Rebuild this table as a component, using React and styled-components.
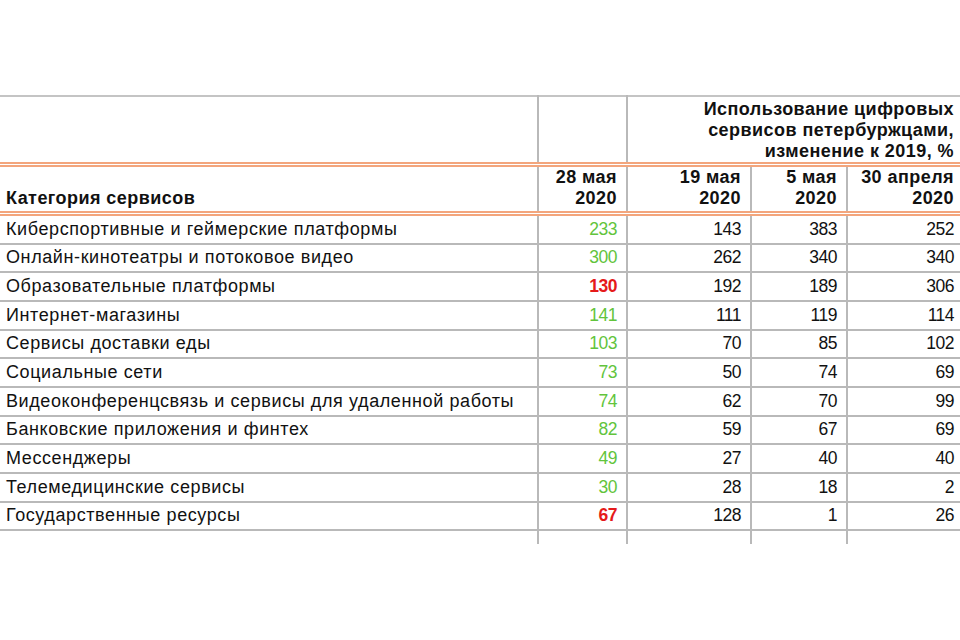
import React from 'react'
import styled, { createGlobalStyle } from 'styled-components'

const GlobalStyle = createGlobalStyle`
  html, body {
    margin: 0;
    padding: 0;
    background: #ffffff;
  }
  body {
    font-family: "Liberation Sans", Arial, sans-serif;
    color: #111111;
  }
`;

const Page = styled.div`
  width: 960px;
  height: 640px;
  overflow: hidden;
  padding-top: 95px;
  box-sizing: border-box;
`;

const Table = styled.table`
  width: 963px;
  border-collapse: collapse;
  table-layout: fixed;
  font-size: 18px;
`;

const TitleRow = styled.tr`
  border-top: 2px solid #c4c4c4;
  border-bottom: 5px double #f3a57c;
`;

const DateRow = styled.tr`
  border-bottom: 5px double #f3a57c;
`;

const Row = styled.tr`
  border-bottom: 2px solid #b9b9b9;
`;

const TailRow = styled.tr``;

const Cell = styled.td`
  padding: ${p => p.$pad || '0'} 9px ${p => p.$padb || '0'} 6px;
  height: ${p => p.$h || '26.66px'};
  text-align: ${p => (p.$left ? 'left' : 'right')};
  vertical-align: ${p => p.$valign || 'middle'};
  border-left: 2px solid #b9b9b9;
  font-weight: ${p => (p.$bold ? 700 : 400)};
  letter-spacing: ${p => (p.$bold ? '0.45px' : '0.6px')};
  line-height: 21px;
  white-space: nowrap;
  &:first-child {
    border-left: none;
  }
`;

const Value = styled.span`
  font-size: 17.5px;
  letter-spacing: -0.5px;
  color: ${p => (p.$tone === 'red' ? '#e51a1a' : p.$tone === 'green' ? '#62c43c' : '#111111')};
  font-weight: ${p => (p.$tone === 'red' ? 700 : 400)};
`;

const rows = [
  ['Киберспортивные и геймерские платформы', 233, 143, 383, 252],
  ['Онлайн-кинотеатры и потоковое видео', 300, 262, 340, 340],
  ['Образовательные платформы', 130, 192, 189, 306],
  ['Интернет-магазины', 141, 111, 119, 114],
  ['Сервисы доставки еды', 103, 70, 85, 102],
  ['Социальные сети', 73, 50, 74, 69],
  ['Видеоконференцсвязь и сервисы для удаленной работы', 74, 62, 70, 99],
  ['Банковские приложения и финтех', 82, 59, 67, 69],
  ['Мессенджеры', 49, 27, 40, 40],
  ['Телемедицинские сервисы', 30, 28, 18, 2],
  ['Государственные ресурсы', 67, 128, 1, 26],
]

function App() {
  return (
    <Page>
      <GlobalStyle />
      <Table>
        <colgroup>
          <col style={{ width: 538 }} />
          <col style={{ width: 89 }} />
          <col style={{ width: 124 }} />
          <col style={{ width: 96 }} />
          <col style={{ width: 116 }} />
        </colgroup>
        <tbody>
          <TitleRow>
            <Cell $h="60px" $pad="2px" />
            <Cell $h="60px" $pad="2px" />
            <Cell $h="60px" $pad="2px" colSpan={3} $bold>
              Использование цифровых<br />
              сервисов петербуржцами,<br />
              изменение к 2019, %
            </Cell>
          </TitleRow>
          <DateRow>
            <Cell $h="42px" $padb="2px" $left $bold $valign="bottom">Категория сервисов</Cell>
            <Cell $h="42px" $padb="2px" $bold $valign="bottom">28 мая<br />2020</Cell>
            <Cell $h="42px" $padb="2px" $bold $valign="bottom">19 мая<br />2020</Cell>
            <Cell $h="42px" $padb="2px" $bold $valign="bottom">5 мая<br />2020</Cell>
            <Cell $h="42px" $padb="2px" $bold $valign="bottom">30 апреля<br />2020</Cell>
          </DateRow>
          {rows.map(r => (
            <Row key={r[0]}>
              <Cell $left>{r[0]}</Cell>
              <Cell>
                <Value $tone={r[1] === 130 || r[1] === 67 ? 'red' : 'green'}>{r[1]}</Value>
              </Cell>
              <Cell><Value>{r[2]}</Value></Cell>
              <Cell><Value>{r[3]}</Value></Cell>
              <Cell><Value>{r[4]}</Value></Cell>
            </Row>
          ))}
          <TailRow>
            <Cell $h="13px" />
            <Cell $h="13px" />
            <Cell $h="13px" />
            <Cell $h="13px" />
            <Cell $h="13px" />
          </TailRow>
        </tbody>
      </Table>
    </Page>
  )
}

export default App
